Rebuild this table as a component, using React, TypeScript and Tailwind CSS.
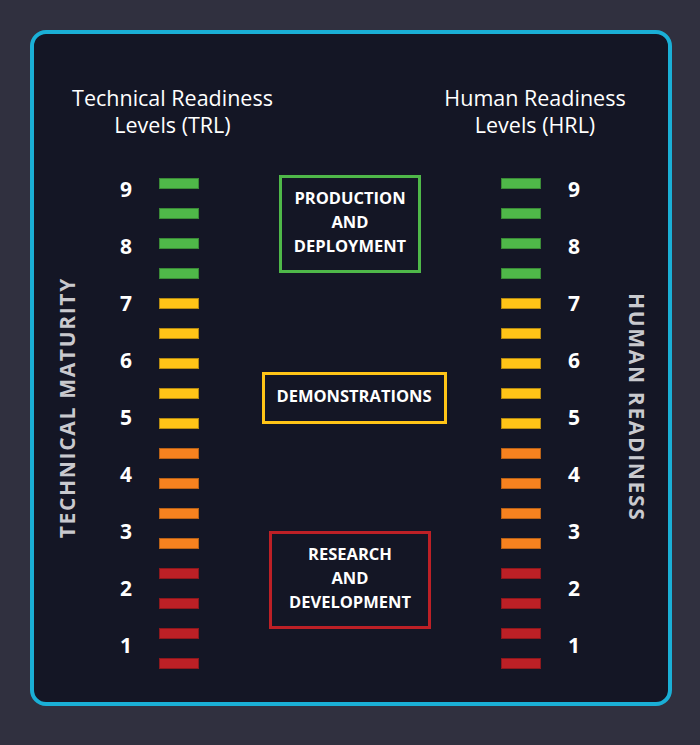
const bars = [
  "green", "green", "green", "green",
  "yellow", "yellow", "yellow", "yellow", "yellow",
  "orange", "orange", "orange", "orange",
  "red", "red", "red", "red",
] as const;

const barClass: Record<(typeof bars)[number], string> = {
  green: "bg-[#4fb849] border-[#3b8a37]",
  yellow: "bg-[#ffc417] border-[#b58a12]",
  orange: "bg-[#f7821f] border-[#b86117]",
  red: "bg-[#bd2026] border-[#8c181d]",
};

const levels = [9, 8, 7, 6, 5, 4, 3, 2, 1];

function Numbers({ className = "" }: { className?: string }) {
  return (
    <div className={`flex w-[50px] flex-col ${className}`}>
      {levels.map((n) => (
        <div
          key={n}
          className="flex h-[57px] items-center justify-center text-[21px] font-bold text-white"
        >
          {n}
        </div>
      ))}
    </div>
  );
}

function Bars({ className = "" }: { className?: string }) {
  return (
    <div className={`flex w-[40px] flex-col gap-[19px] pt-[16.5px] ${className}`}>
      {bars.map((c, i) => (
        <div key={i} className={`h-[11px] w-[40px] border ${barClass[c]}`} />
      ))}
    </div>
  );
}

function Phase({
  lines,
  className,
}: {
  lines: string[];
  className: string;
}) {
  return (
    <div
      className={`flex flex-col items-center justify-center border-[3px] pb-[3px] text-center text-[16.5px] font-bold leading-[24px] text-white ${className}`}
    >
      {lines.map((l) => (
        <span key={l}>{l}</span>
      ))}
    </div>
  );
}

export default function App() {
  return (
    <div className="min-h-[745px] w-[700px] bg-[#30303f] pl-[30px] pt-[30px] font-['Open_Sans',sans-serif]">
      <div className="w-[642px] rounded-[16px] border-4 border-[#1aafd6] bg-[#141625] pb-[28px] pt-[50px]">
        <div className="flex justify-between">
          <h2 className="w-[277px] text-center text-[21.5px] font-normal leading-[27px] text-white">
            Technical Readiness
            <br />
            Levels (TRL)
          </h2>
          <h2 className="w-[266px] text-center text-[21.5px] font-normal leading-[27px] text-white">
            Human Readiness
            <br />
            Levels (HRL)
          </h2>
        </div>

        <div className="mt-[23px] flex items-stretch">
          <div className="flex w-[67px] items-center justify-center pb-[20px]">
            <span className="rotate-180 text-[21px] font-bold tracking-[0.08em] text-[#c9c9ce] [writing-mode:vertical-rl]">
              TECHNICAL MATURITY
            </span>
          </div>
          <Numbers />
          <Bars className="ml-[8px]" />

          {/* phase boxes */}
          <div className="flex w-[302px] flex-col items-center">
            <Phase
              lines={["PRODUCTION", "AND", "DEPLOYMENT"]}
              className="mt-[13.5px] h-[98px] w-[142px] border-[#4fb849]"
            />
            <Phase
              lines={["DEMONSTRATIONS"]}
              className="ml-[8px] mt-[99px] h-[52px] w-[185px] border-[#ffc417]"
            />
            <Phase
              lines={["RESEARCH", "AND", "DEVELOPMENT"]}
              className="mt-[107px] h-[98px] w-[162px] border-[#bd2026]"
            />
          </div>

          <Bars />
          <Numbers className="ml-[8px]" />
          <div className="flex flex-1 items-center justify-center pb-[20px] pl-[6px]">
            <span className="text-[21px] font-bold tracking-[0.08em] text-[#c9c9ce] [writing-mode:vertical-rl]">
              HUMAN READINESS
            </span>
          </div>
        </div>
      </div>
    </div>
  );
}
